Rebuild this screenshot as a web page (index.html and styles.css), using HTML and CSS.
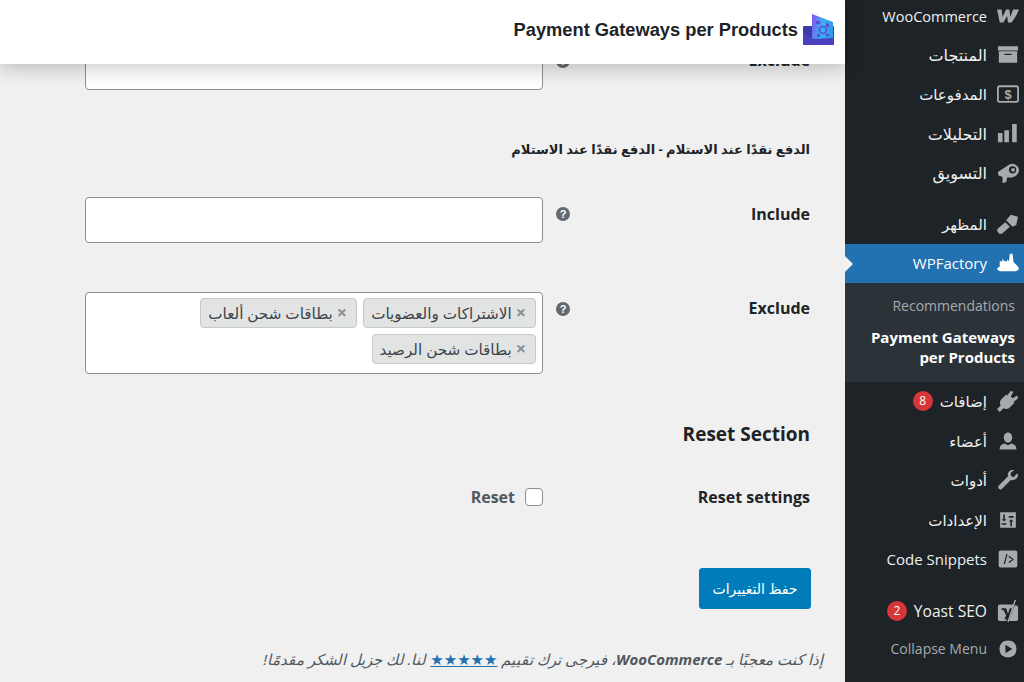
FILE: index.html
```html
<!DOCTYPE html>
<html lang="ar" dir="rtl">
<head>
    <meta charset="UTF-8">
    <title>Payment Gateways per Products</title>
    <link rel="stylesheet" href="styles.css">
</head>
<body>

    <div class="page">
        <!-- Admin menu -->
        <nav class="sidebar">
            <a class="menu-item first"><svg class="icon" viewBox="0 0 24 24"><path d="M0 5h5l1 8 4-8h3.500l1 8 3-8h6.500c-2 5-5 10-8 14h-4l-1-7-4 7h-4c-1-5-2-10-3-14z"/></svg><span class="latin" dir="ltr">WooCommerce</span></a>
            <a class="menu-item wide"><svg class="icon" viewBox="0 0 24 24"><path d="M1 2.500h22v4.500h-22zM2 8h20v12.500h-20zM8 10.500v1.500h8v-1.500z" fill-rule="evenodd"/></svg><span>المنتجات</span></a>
            <a class="menu-item"><svg class="icon" viewBox="0 0 24 24"><rect x="1" y="3.500" width="22" height="17" rx="2" fill="none" stroke="#a7aaad" stroke-width="2"/><text class="dollar" x="12" y="17" text-anchor="middle">$</text></svg><span>المدفوعات</span></a>
            <a class="menu-item wide"><svg class="icon" viewBox="0 0 24 24"><path d="M1 11h5v10h-5zM8 8h5v13h-5zM16.500 1h5v20h-5z"/></svg><span>التحليلات</span></a>
            <a class="menu-item wide"><svg class="icon" viewBox="0 0 24 24"><path d="M1 11l12-8c5-3 11 1 11 6s-6 9-11 8h-2l-1 5-4 1v-7l-4-1c-1-1-1-3-1-4z"/><circle cx="17" cy="8.500" r="4" fill="#1d2327"/><circle cx="17.500" cy="8.500" r="2"/></svg><span>التسويق</span></a>
            <a class="menu-item gap-top"><svg class="icon" viewBox="0 0 24 24"><path d="M10 8l5-6 8 2-2 9-4 2zM9 10l5 5-8 7c-1 1-3 1-4 0l-1-1c-1-1-1-3 0-4z"/></svg><span>المظهر</span></a>

            <a class="menu-item current"><svg class="icon" viewBox="0 0 24 24"><path d="M0 18c1-1 2-2 3-2v-6h3v-3l2 3h3v-2l2 2 1-8h3l1 9 3 3c1 1 2 2 3 4-1 2-2 3-4 3h-16c-2 0-3-1-4-3z"/></svg><span class="latin" dir="ltr">WPFactory</span></a>
            <div class="submenu">
                <a class="sub-link" dir="ltr">Recommendations</a>
                <a class="sub-link active" dir="ltr">Payment Gateways<br>per Products</a>
            </div>

            <a class="menu-item"><svg class="icon" viewBox="0 0 24 24"><path d="M15 1l3 1-3 5 2 2 5-3 1 3-5 4 1 1-6 6c-2 1-4 1-6 0l-4 4-3-3 4-4c-1-2-1-4 0-6l6-6 1 1z"/></svg><span>إضافات</span><b class="badge">8</b></a>
            <a class="menu-item"><svg class="icon" viewBox="-1 -1 26 26"><path d="M12 2c3 0 5 3 5 6s-2 6-5 6-5-3-5-6 2-6 5-6zM2 22c0-4 2-6 6-7l4 2 4-2c4 1 6 3 6 7z"/></svg><span>أعضاء</span></a>
            <a class="menu-item"><svg class="icon" viewBox="0 0 24 24"><path d="M17 1c-4 0-6 4-5 7l-10 10c-2 3 1 5 3 4l10-10c4 1 8-2 8-6l-1-1-4 4-3-2v-3l4-3z"/></svg><span>أدوات</span></a>
            <a class="menu-item"><svg class="icon" viewBox="-2 -2 28 28"><path d="M2 2h20v20h-20zM6 5v6h-2l3 3 3-3h-2v-6zM4 16v2h6v-2zM17 20v-6h2l-3-3-3 3h2v6zM13 7v2h6v-2z" fill-rule="evenodd"/></svg><span>الإعدادات</span></a>
            <a class="menu-item"><svg class="icon" viewBox="-1 -1 26 26"><path d="M3 2h18c1 0 2 1 2 2v16c0 1-1 2-2 2h-18c-1 0-2-1-2-2v-16c0-1 1-2 2-2zM10 6l-3 12h1.500l3-12zM13 8v2l4 2.500-4 2.500v2l6-4.500z" fill-rule="evenodd"/></svg><span class="latin" dir="ltr">Code Snippets</span></a>
            <a class="menu-item gap-top yoast"><svg class="icon" viewBox="0 0 24 24"><path d="M3 5h15l-8 18h-7c-1 0-2-1-2-2v-14c0-1 1-2 2-2zM19 6h2c1 0 2 1 2 2v13c0 1-1 2-2 2h-8z"/><path d="M5 9h5l2 6 2-6h3l-5 12h-4l2-4-3-6h-2z" fill="#1d2327"/><path d="M20 0l-8 24" stroke="#a7aaad" stroke-width="1.500"/></svg><span class="latin" dir="ltr">Yoast SEO</span><b class="badge">2</b></a>
            <a class="menu-item collapse"><svg class="icon" viewBox="-1 -1 26 26"><path d="M12 2c6 0 10 4 10 10s-4 10-10 10-10-4-10-10 4-10 10-10zM9 7v10l8-5z" fill-rule="evenodd"/></svg><span dir="ltr">Collapse Menu</span></a>
        </nav>

        <main class="main">
            <header class="topbar">
                <svg class="logo" viewBox="0 0 31 31">
                    <defs>
                        <linearGradient id="sheet" x1="0" y1="0" x2="1" y2="0.300">
                            <stop offset="0" stop-color="#8d4cf2"/>
                            <stop offset="0.600" stop-color="#35b4ec"/>
                            <stop offset="1" stop-color="#2f9be6"/>
                        </linearGradient>
                    </defs>
                    <rect x="0" y="12" width="31" height="19" rx="1" fill="#3a3aa8"/>
                    <path d="M9 0l21 8v17l-21 3z" fill="url(#sheet)"/>
                    <circle cx="20" cy="16" r="3.500" fill="none" stroke="#5e4bd6" stroke-width="1.500"/>
                    <path d="M13 7h4v3h-4zM23 9l3 1v3h-3zM14 20h3v3h-3zM23 20h3v2h-3z" fill="#5e4bd6"/>
                    <path d="M0 18l10 7 21-1v6c0 .5-.5 1-1 1h-29c-.5 0-1-.5-1-1z" fill="#4a3fbe"/>
                </svg>
                <h1 dir="ltr">Payment Gateways per Products</h1>
            </header>

            <form class="settings">
                <div class="row">
                    <label class="row-label">Exclude</label>
                    <i class="tip">?</i>
                    <div class="field"></div>
                </div>

                <h2 class="section-title">الدفع نقدًا عند الاستلام - الدفع نقدًا عند الاستلام</h2>

                <div class="row include-row">
                    <label class="row-label">Include</label>
                    <i class="tip">?</i>
                    <div class="field"></div>
                </div>

                <div class="row exclude-row">
                    <label class="row-label">Exclude</label>
                    <i class="tip">?</i>
                    <div class="field tags">
                        <span class="tag"><em>×</em>الاشتراكات والعضويات</span>
                        <span class="tag"><em>×</em>بطاقات شحن ألعاب</span>
                        <span class="tag"><em>×</em>بطاقات شحن الرصيد</span>
                    </div>
                </div>

                <h2 class="reset-title">Reset Section</h2>

                <div class="row reset-row">
                    <label class="row-label">Reset settings</label>
                    <div class="check-wrap">
                        <span class="checkbox"></span>
                        <span class="check-text">Reset</span>
                    </div>
                </div>

                <button class="save" type="button">حفظ التغييرات</button>

                <p class="footer-note">إذا كنت معجبًا بـ <strong>WooCommerce</strong>، فيرجى ترك تقييم <a>★★★★★</a> لنا. لك جزيل الشكر مقدمًا!</p>
            </form>
        </main>
    </div>

</body>
</html>
```

FILE: styles.css
```css
* {
    box-sizing: border-box;
}

html, body {
    margin: 0;
    padding: 0;
    height: 682px;
    overflow: hidden;
}

body {
    font-family: "Open Sans", "DejaVu Sans", sans-serif;
    background-color: #f0f0f0;
    color: #1d2327;
}

.page {
    display: flex;
    height: 682px;
}

/* Admin menu */
.sidebar {
    width: 179px;
    flex: none;
    background-color: #1d2327;
    display: flex;
    flex-direction: column;
}

.menu-item {
    display: flex;
    align-items: center;
    height: 39.5px;
    padding-right: 5px;
    color: #f0f0f1;
    font-size: 15px;
}

.menu-item.wide {
    font-size: 16px;
}

.menu-item .latin {
    font-size: 15px;
}

.menu-item.first {
    height: 32px;
    margin-bottom: 3px;
}

.menu-item.first .latin {
    font-size: 14.5px;
}

.menu-item.yoast .latin {
    font-size: 15.6px;
}

.menu-item.gap-top {
    margin-top: 11px;
}

.menu-item.current {
    position: relative;
    height: 39px;
    background-color: #2271b1;
    color: #fff;
}

.menu-item.current::after {
    content: "";
    position: absolute;
    left: 0;
    top: 12px;
    border: 8px solid transparent;
    border-left-color: #f0f0f0;
}

.icon {
    width: 22px;
    height: 22px;
    flex: none;
    margin-left: 10px;
    fill: #a7aaad;
}

.dollar {
    font-family: "Liberation Sans", Arial, sans-serif;
    font-size: 14px;
    font-weight: 700;
}

.current .icon {
    fill: #fff;
}

.submenu {
    height: 99px;
    padding: 13px 9px 0 0;
    background-color: #2c3338;
    font-size: 14px;
    text-align: right;
}

.sub-link {
    display: block;
    color: #a7aaad;
    line-height: 20px;
    margin-bottom: 11px;
}

.sub-link.active {
    color: #fff;
    font-size: 15px;
    font-weight: 700;
}

.badge {
    width: 20px;
    height: 20px;
    margin-right: 7px;
    border-radius: 50%;
    background-color: #d63638;
    color: #fff;
    font-size: 12px;
    font-weight: 400;
    line-height: 20px;
    text-align: center;
}

.menu-item.yoast {
    margin-top: 12px;
}

.menu-item.collapse {
    color: #a7aaad;
    font-size: 14px;
    height: 36px;
}

/* Main area */
.main {
    position: relative;
    flex: 1;
    min-width: 0;
}

.topbar {
    position: absolute;
    top: 0;
    left: 0;
    right: 0;
    height: 64px;
    display: flex;
    align-items: center;
    padding: 0 11px 5px 0;
    background-color: #fff;
    box-shadow: 0 4px 18px rgba(0, 0, 0, 0.22);
}

.topbar h1 {
    margin: 0 5px 0 0;
    font-family: "Liberation Sans", Arial, sans-serif;
    font-size: 18.3px;
    font-weight: 700;
    color: #1d2327;
}

.logo {
    width: 31px;
    height: 31px;
    flex: none;
}

.settings {
    padding: 44px 34px 0 0;
}

.row {
    display: flex;
    align-items: flex-start;
}

.row-label {
    width: 241px;
    flex: none;
    padding: 6px 1px 0 0;
    font-size: 16px;
    font-weight: 700;
    line-height: 20px;
}

.include-row .row-label {
    padding-top: 7px;
}

.tip {
    width: 14px;
    height: 14px;
    flex: none;
    margin: 10px 0 0 13px;
    border-radius: 50%;
    background-color: #646970;
    color: #fff;
    font-family: "Liberation Sans", Arial, sans-serif;
    font-size: 11px;
    font-style: normal;
    font-weight: 700;
    line-height: 14px;
    text-align: center;
}

.field {
    width: 458px;
    min-height: 46px;
    background-color: #fff;
    border: 1px solid #8c8f94;
    border-radius: 4px;
}

.section-title {
    margin: 49px 1px 38px 0;
    font-size: 13px;
    font-weight: 700;
    line-height: 20px;
}

.exclude-row {
    margin-top: 49px;
}

.tags {
    display: flex;
    flex-wrap: wrap;
    align-content: flex-start;
    gap: 6px;
    height: 82px;
    padding: 5px 6px 0;
}

.tag {
    height: 30px;
    padding: 0 9px 0 7px;
    background-color: #e2e4e4;
    border: 1px solid #c5c8ca;
    border-radius: 4px;
    font-size: 15.2px;
    line-height: 28px;
    color: #3c434a;
}

.tag em {
    margin-left: 4px;
    color: #8c8f94;
    font-size: 18px;
    font-style: normal;
    font-weight: 700;
    line-height: 20px;
}

.reset-title {
    margin: 48px 1px 0 0;
    font-size: 19px;
    font-weight: 700;
    line-height: 24px;
}

.reset-row {
    margin-top: 40px;
    align-items: center;
}

.reset-row .row-label {
    width: 268px;
    padding-top: 0;
}

.check-wrap {
    display: flex;
    align-items: center;
}

.checkbox {
    width: 18px;
    height: 18px;
    background-color: #fff;
    border: 1px solid #8c8f94;
    border-radius: 4px;
}

.check-text {
    margin-right: 10px;
    font-size: 16px;
    font-weight: 700;
    color: #50575e;
}

.save {
    display: block;
    width: 112px;
    height: 41px;
    margin: 60px 0 0;
    padding: 0;
    background-color: #007cba;
    border: 1px solid #007cba;
    border-radius: 3px;
    color: #fff;
    font-family: inherit;
    font-size: 14px;
}

.footer-note {
    margin: 40px -12px 0 0;
    font-size: 15px;
    font-style: italic;
    line-height: 20px;
    color: #50575e;
    white-space: nowrap;
}

.footer-note a {
    color: #2271b1;
    text-decoration: underline;
}
```
